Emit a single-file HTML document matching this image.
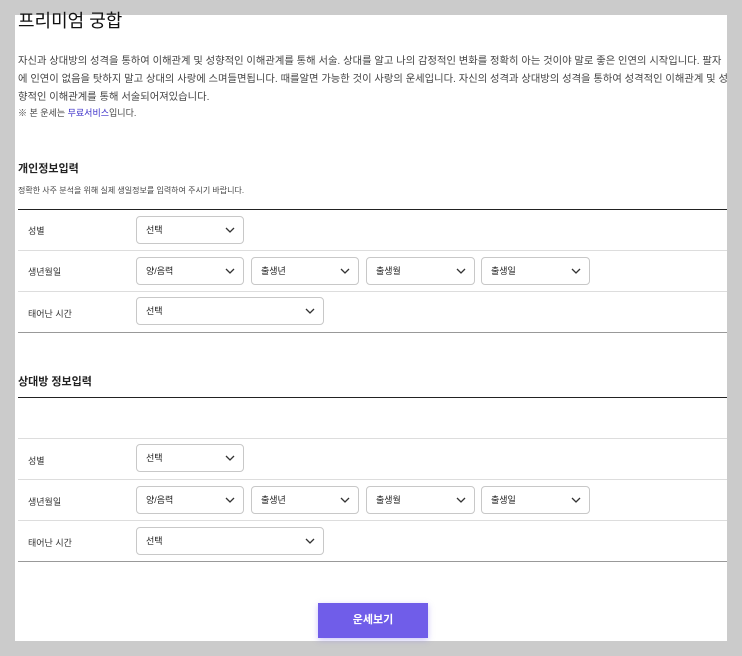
<!DOCTYPE html>
<html><head><meta charset="utf-8"><style>
*{margin:0;padding:0;box-sizing:border-box}
body{width:742px;height:656px;background:#cbcbcb;font-family:"Liberation Sans","Noto Sans CJK KR",sans-serif;color:#222;position:relative;overflow:hidden}
.panel{position:absolute;left:15px;top:15px;width:712px;height:626px;background:#fff}
.a{position:absolute;white-space:nowrap}
.p{font-size:10.3px;color:#444;left:18px}
.h{font-size:11px;font-weight:bold;left:18px;color:#222}
.line{position:absolute;left:18px;width:709px;height:1px;background:#ddd}
.dark{background:#222}
.mid{background:#999}
.lab{position:absolute;left:28px;font-size:9px;color:#333}
.sel{position:absolute;height:28px;border:1px solid #c8c8c8;border-radius:4px;font-size:9px;color:#222;padding-left:9px;line-height:26px}
.sel svg{position:absolute;right:8px;top:9px}
.btn{position:absolute;left:318px;top:603px;width:110px;height:35px;background:#705de9;color:#fff;font-size:11px;font-weight:bold;text-align:center;line-height:35px;box-shadow:0 2px 6px rgba(112,93,233,.35)}
</style></head><body>
<div class="panel"></div>
<div class="a" style="left:18px;top:7px;font-size:18px;color:#111">프리미엄 궁합</div>
<div class="a p" style="top:52px">자신과 상대방의 성격을 통하여 이해관계 및 성향적인 이해관계를 통해 서술. 상대를 알고 나의 감정적인 변화를 정확히 아는 것이야 말로 좋은 인연의 시작입니다. 팔자</div>
<div class="a p" style="top:70px">에 인연이 없음을 탓하지 말고 상대의 사랑에 스며들면됩니다. 때를알면 가능한 것이 사랑의 운세입니다. 자신의 성격과 상대방의 성격을 통하여 성격적인 이해관계 및 성</div>
<div class="a p" style="top:88px">향적인 이해관계를 통해 서술되어져있습니다.</div>
<div class="a p" style="top:106px;font-size:9px">※ 본 운세는 <span style="color:#3b2fc9">무료서비스</span>입니다.</div>

<div class="a h" style="top:160px">개인정보입력</div>
<div class="a p" style="top:185px;font-size:8px">정확한 사주 분석을 위해 실제 생일정보를 입력하여 주시기 바랍니다.</div>
<div class="line dark" style="top:209px"></div>
<div class="line" style="top:250px"></div>
<div class="line" style="top:291px"></div>
<div class="line mid" style="top:332px"></div>

<div class="a h" style="top:373px">상대방 정보입력</div>
<div class="line dark" style="top:397px"></div>
<div class="line" style="top:438px"></div>
<div class="line" style="top:479px"></div>
<div class="line" style="top:520px"></div>
<div class="line mid" style="top:561px"></div>

<div class="lab" style="top:224px">성별</div>
<div class="lab" style="top:265px">생년월일</div>
<div class="lab" style="top:307px">태어난 시간</div>
<div class="lab" style="top:454px">성별</div>
<div class="lab" style="top:495px">생년월일</div>
<div class="lab" style="top:536px">태어난 시간</div>

<div class="sel" style="left:136px;top:216px;width:108px">선택<svg width="10" height="8" viewBox="0 0 10 8"><path d="M1 2l4 4 4-4" fill="none" stroke="#333" stroke-width="1.3"/></svg></div>
<div class="sel" style="left:136px;top:257px;width:108px">양/음력<svg width="10" height="8" viewBox="0 0 10 8"><path d="M1 2l4 4 4-4" fill="none" stroke="#333" stroke-width="1.3"/></svg></div>
<div class="sel" style="left:251px;top:257px;width:108px">출생년<svg width="10" height="8" viewBox="0 0 10 8"><path d="M1 2l4 4 4-4" fill="none" stroke="#333" stroke-width="1.3"/></svg></div>
<div class="sel" style="left:366px;top:257px;width:109px">출생월<svg width="10" height="8" viewBox="0 0 10 8"><path d="M1 2l4 4 4-4" fill="none" stroke="#333" stroke-width="1.3"/></svg></div>
<div class="sel" style="left:481px;top:257px;width:109px">출생일<svg width="10" height="8" viewBox="0 0 10 8"><path d="M1 2l4 4 4-4" fill="none" stroke="#333" stroke-width="1.3"/></svg></div>
<div class="sel" style="left:136px;top:297px;width:188px">선택<svg width="10" height="8" viewBox="0 0 10 8"><path d="M1 2l4 4 4-4" fill="none" stroke="#333" stroke-width="1.3"/></svg></div>

<div class="sel" style="left:136px;top:444px;width:108px">선택<svg width="10" height="8" viewBox="0 0 10 8"><path d="M1 2l4 4 4-4" fill="none" stroke="#333" stroke-width="1.3"/></svg></div>
<div class="sel" style="left:136px;top:486px;width:108px">양/음력<svg width="10" height="8" viewBox="0 0 10 8"><path d="M1 2l4 4 4-4" fill="none" stroke="#333" stroke-width="1.3"/></svg></div>
<div class="sel" style="left:251px;top:486px;width:108px">출생년<svg width="10" height="8" viewBox="0 0 10 8"><path d="M1 2l4 4 4-4" fill="none" stroke="#333" stroke-width="1.3"/></svg></div>
<div class="sel" style="left:366px;top:486px;width:109px">출생월<svg width="10" height="8" viewBox="0 0 10 8"><path d="M1 2l4 4 4-4" fill="none" stroke="#333" stroke-width="1.3"/></svg></div>
<div class="sel" style="left:481px;top:486px;width:109px">출생일<svg width="10" height="8" viewBox="0 0 10 8"><path d="M1 2l4 4 4-4" fill="none" stroke="#333" stroke-width="1.3"/></svg></div>
<div class="sel" style="left:136px;top:527px;width:188px">선택<svg width="10" height="8" viewBox="0 0 10 8"><path d="M1 2l4 4 4-4" fill="none" stroke="#333" stroke-width="1.3"/></svg></div>

<div class="btn">운세보기</div>
</body></html>
